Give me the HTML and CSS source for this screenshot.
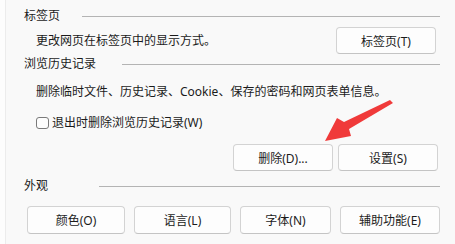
FILE: index.html
```html
<!DOCTYPE html>
<html lang="zh-CN">
<head>
<meta charset="utf-8">
<link rel="stylesheet" href="styles.css">
</head>
<body>
<div class="window">
  <div class="strip"></div>
  <div class="panel">
    <div class="header"><span class="label">标签页</span><span class="rule rule-tabs"></span></div>
    <div class="row row-tabs">
      <span class="desc">更改网页在标签页中的显示方式。</span>
      <button class="btn btn-tabs">标签页(T)</button>
    </div>
    <div class="header header-history"><span class="label">浏览历史记录</span><span class="rule rule-history"></span></div>
    <div class="desc desc-history">删除临时文件、历史记录、Cookie、保存的密码和网页表单信息。</div>
    <label class="check-row"><span class="checkbox"></span><span>退出时删除浏览历史记录(W)</span></label>
    <div class="btn-row btn-row-history">
      <button class="btn btn-wide">删除(D)...</button>
      <button class="btn btn-wide">设置(S)</button>
    </div>
    <div class="header header-look"><span class="label">外观</span><span class="rule rule-look"></span></div>
    <div class="btn-row btn-row-look">
      <button class="btn btn-color">颜色(O)</button>
      <button class="btn btn-lang">语言(L)</button>
      <button class="btn btn-font">字体(N)</button>
      <button class="btn btn-access">辅助功能(E)</button>
    </div>
  </div>
  <svg class="arrow" width="455" height="244" viewBox="0 0 455 244">
    <polygon points="390,100 393,103 349,129 351,136 325,141 337,118 344,122" fill="#f03a3a"/>
  </svg>
</div>
</body>
</html>
```
FILE: styles.css
```css
html, body {
  margin: 0;
  padding: 0;
}
body {
  width: 455px;
  height: 244px;
  overflow: hidden;
  background: #f9f9f9;
  font-family: "Noto Sans", "Noto Sans CJK SC", sans-serif;
  font-size: 12px;
  color: #1b1b1b;
}
.window {
  position: relative;
  display: flex;
  width: 455px;
  height: 244px;
}
.strip {
  width: 5px;
  flex: none;
  background: #fdfdfd;
  border-right: 1px solid #ececec;
}
.panel {
  flex: 1;
  display: flex;
  flex-direction: column;
  padding: 8px 15px 0 18px;
}
.header {
  height: 16px;
  display: flex;
  align-items: center;
  line-height: 16px;
}
.label {
  white-space: nowrap;
}
.rule {
  flex: 1;
  height: 1px;
  background: #b4b4b4;
}
.rule-tabs { margin-left: 22px; }
.rule-history { margin-left: 26px; }
.rule-look { margin-left: 51px; }
.row {
  display: flex;
  align-items: center;
  justify-content: space-between;
}
.row-tabs {
  margin-top: 3px;
  height: 27px;
  padding-right: 4px;
}
.desc {
  padding-left: 12px;
  line-height: 16px;
  white-space: nowrap;
}
.header-history { margin-top: 2px; }
.desc-history {
  margin-top: 12px;
  height: 16px;
}
.check-row {
  margin-top: 15px;
  height: 16px;
  padding-left: 12px;
  display: flex;
  align-items: center;
  gap: 3px;
  line-height: 16px;
}
.checkbox {
  width: 11px;
  height: 10px;
  border: 1px solid #7a7a7a;
  border-radius: 3px;
  background: #fdfdfd;
}
.btn {
  font: inherit;
  color: #1b1b1b;
  background: #fdfdfd;
  border: 1px solid #d3d3d3;
  border-bottom-color: #c4c4c4;
  border-radius: 4px;
  padding: 0;
  height: 100%;
  box-sizing: border-box;
}
.btn-tabs {
  width: 100px;
  height: 27px;
}
.btn-row {
  display: flex;
}
.btn-row-history {
  margin-top: 13px;
  height: 27px;
  justify-content: flex-end;
  gap: 5px;
  padding-right: 2px;
}
.btn-wide { width: 100px; }
.header-look { margin-top: 7px; }
.btn-row-look {
  margin-top: 12px;
  height: 28px;
  gap: 9px;
  padding-left: 3px;
}
.btn-color { width: 98px; }
.btn-lang { width: 97px; }
.btn-font { width: 91px; }
.btn-access { width: 100px; }
.arrow {
  position: absolute;
  left: 0;
  top: 0;
  pointer-events: none;
}
```
